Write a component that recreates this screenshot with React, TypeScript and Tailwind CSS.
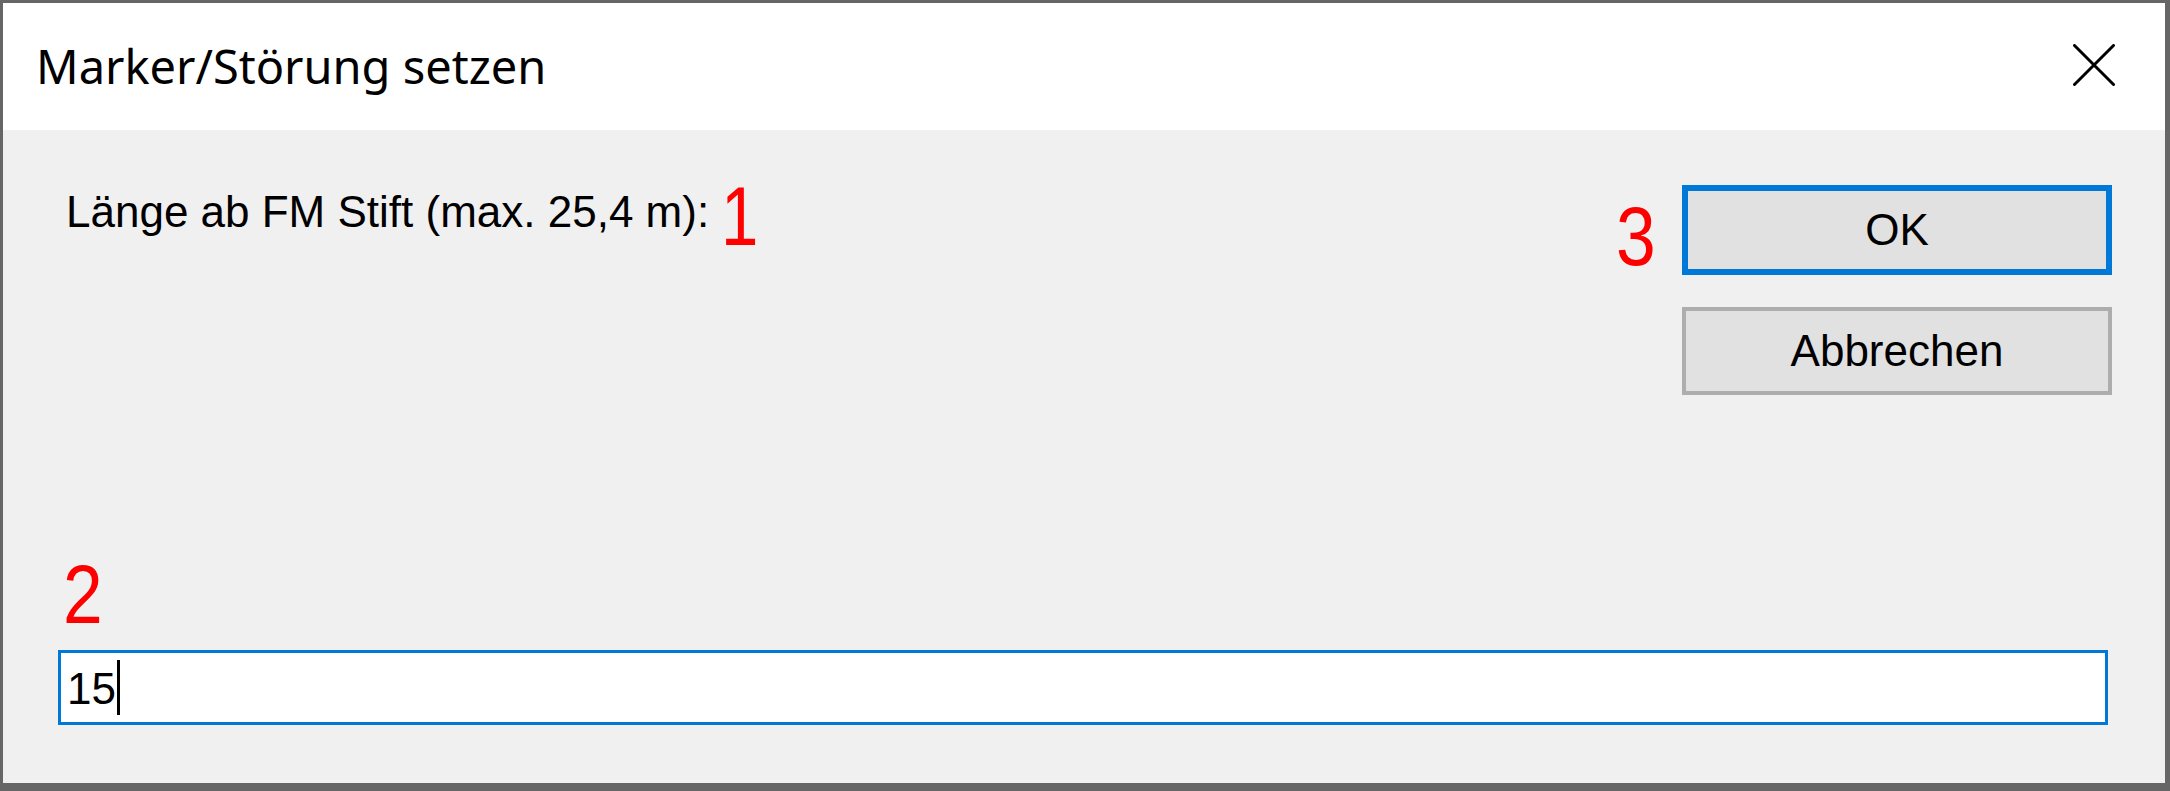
const CloseIcon = () => (
  <svg width="42" height="42" viewBox="0 0 42 42" className="mt-[41px] mr-[50px]">
    <path d="M1.5 1.5 L40.5 40.5 M40.5 1.5 L1.5 40.5" stroke="#000" strokeWidth="3" strokeLinecap="round" fill="none" />
  </svg>
);

const Marker = ({ n, className }: { n: string; className?: string }) => (
  <span
    className={`inline-block text-[84px] leading-none text-[#ff0000] font-['Liberation_Sans',Arial,sans-serif] ${className ?? ""}`}
  >
    {n}
  </span>
);

export default function App() {
  return (
    <div className="w-[2170px] h-[791px] bg-[#666666] pt-[3px] pl-[3px] pr-[5px] pb-[8px]">
      <div className="flex h-full flex-col">
        {/* title bar */}
        <div className="flex h-[127px] shrink-0 items-start justify-between bg-white">
          <span className="mt-[40px] pl-[33px] text-[47px] leading-none text-black font-['Noto_Sans',sans-serif]">
            Marker/Störung setzen
          </span>
          <CloseIcon />
        </div>

        {/* body */}
        <div className="flex flex-1 flex-col bg-[#f0f0f0] pl-[55px] pr-[57px] pb-[58px] text-[44px] leading-none text-black font-['Liberation_Sans',Arial,sans-serif]">
          <div className="mt-[44px] flex items-start justify-between">
            <div className="flex items-start pl-[8px]">
              <span className="mt-[16px]">Länge ab FM Stift (max. 25,4 m):</span>
              <Marker n="1" className="ml-[12px] origin-left scale-x-[0.8]" />
            </div>
            <div className="-mr-[4px] flex items-start">
              <Marker n="3" className="mt-[20px] mr-[26px] origin-right scale-x-[0.85]" />
              <div className="flex flex-col">
                <button className="mt-[11px] flex h-[90px] w-[430px] items-center justify-center border-[6px] border-[#0078d7] bg-[#e1e1e1] text-[44px] leading-none">
                  OK
                </button>
                <button className="mt-[32px] flex h-[88px] w-[430px] items-center justify-center border-[4px] border-[#adadad] bg-[#e1e1e1] text-[44px] leading-none">
                  Abbrechen
                </button>
              </div>
            </div>
          </div>

          <Marker n="2" className="mt-auto ml-[5px] self-start origin-left scale-x-[0.85]" />
          <div className="mt-[14px] flex h-[75px] items-start border-[3px] border-[#0078d7] bg-white pl-[6px] pt-[14px]">
            <span>15</span>
            <span className="-mt-[7px] ml-[1px] h-[55px] w-[3px] bg-black" />
          </div>
        </div>
      </div>
    </div>
  );
}
